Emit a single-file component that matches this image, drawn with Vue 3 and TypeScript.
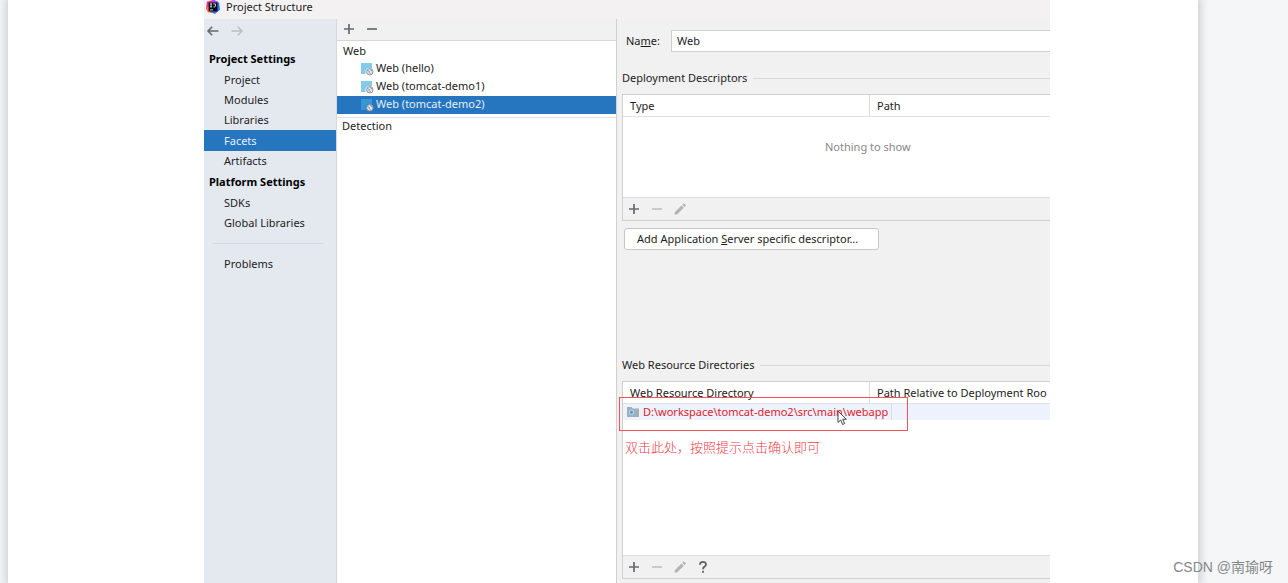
<script setup lang="ts">
import { ref } from 'vue'

interface NavGroup {
  title: string
  items: string[]
}

const groups: NavGroup[] = [
  { title: 'Project Settings', items: ['Project', 'Modules', 'Libraries', 'Facets', 'Artifacts'] },
  { title: 'Platform Settings', items: ['SDKs', 'Global Libraries'] },
]
const facets: string[] = ['Web (hello)', 'Web (tomcat-demo1)', 'Web (tomcat-demo2)']

const activeNav = ref('Facets')
const activeFacet = ref('Web (tomcat-demo2)')
const facetName = ref('Web')
</script>

<template>
  <div class="desk">
    <div class="paper">
      <section class="dialog">
        <header class="titlebar">
          <svg class="logo" viewBox="0 0 16 16" aria-hidden="true">
            <path d="M1 2 8 0 9 8 3 14 0 10Z" fill="#f0318c" />
            <path d="M0 9 4 7 8 15 2 14Z" fill="#f97a3d" />
            <path d="M9 0 15 3 16 11 10 16 5 13Z" fill="#2f6df2" />
            <path d="M8 0 14 2 12 5 7 3Z" fill="#8a4be8" />
            <rect x="3" y="3" width="10" height="10" fill="#0b0b10" />
            <path d="M4.5 4.5h2.6M5.8 4.5v3.4M4.5 7.9h2.6M8.4 4.5h2.4v2.4q0 1-1.2 1H8.4M4.5 11.3h3.6" fill="none" stroke="#fff" stroke-width="0.9" />
          </svg>
          <span>Project Structure</span>
        </header>

        <div class="body">
          <nav class="sidebar">
            <div class="history">
              <button type="button" class="icon" aria-label="Back">
                <svg viewBox="0 0 14 14"><path d="M12.5 7H2M6.2 2.8 2 7l4.2 4.2" fill="none" stroke="#66696e" stroke-width="1.6" /></svg>
              </button>
              <button type="button" class="icon" aria-label="Forward" disabled>
                <svg viewBox="0 0 14 14"><path d="M1.5 7H12M7.8 2.8 12 7l-4.2 4.2" fill="none" stroke="#b9bdc4" stroke-width="1.4" /></svg>
              </button>
            </div>
            <template v-for="group in groups" :key="group.title">
              <h2 class="group">{{ group.title }}</h2>
              <button
                v-for="item in group.items"
                :key="item"
                type="button"
                class="nav-item"
                :class="{ selected: item === activeNav }"
                @click="activeNav = item"
              >{{ item }}</button>
            </template>
            <hr class="nav-rule">
            <button type="button" class="nav-item">Problems</button>
          </nav>

          <div class="facets">
            <div class="facet-tools">
              <button type="button" class="icon" aria-label="Add facet">
                <svg viewBox="0 0 14 14"><path d="M7 2v10M2 7h10" stroke="#66696e" stroke-width="1.7" /></svg>
              </button>
              <button type="button" class="icon" aria-label="Remove facet">
                <svg viewBox="0 0 14 14"><path d="M2 7h10" stroke="#66696e" stroke-width="1.7" /></svg>
              </button>
            </div>
            <div class="tree">
              <div class="tree-root">Web</div>
              <button
                v-for="facet in facets"
                :key="facet"
                type="button"
                class="tree-item"
                :class="{ selected: facet === activeFacet }"
                @click="activeFacet = facet"
              >
                <svg class="facet-icon" viewBox="0 0 14 14" aria-hidden="true">
                  <path class="tile" d="M1 1h11v5H8L5.5 8.5V12H1Z" />
                  <circle cx="9.8" cy="9.8" r="3.2" fill="#e4e7eb" stroke="#8d959f" />
                  <path d="M7.2 8.5 9.5 9.5 9.2 10.8 10.8 12M9.8 7 12 9" fill="none" stroke="#8d959f" />
                </svg>
                <span>{{ facet }}</span>
              </button>
            </div>
            <div class="detection">Detection</div>
          </div>

          <main class="editor">
            <div class="name-row">
              <label for="facet-name">Na<u>m</u>e:</label>
              <input id="facet-name" v-model="facetName" type="text">
            </div>

            <h3 class="legend">Deployment Descriptors</h3>
            <div class="panel descriptors">
              <table class="grid">
                <thead>
                  <tr><th class="first">Type</th><th>Path</th></tr>
                </thead>
              </table>
              <p class="empty">Nothing to show</p>
              <div class="tools">
                <button type="button" class="icon" aria-label="Add descriptor">
                  <svg viewBox="0 0 14 14"><path d="M7 2v10M2 7h10" stroke="#66696e" stroke-width="1.7" /></svg>
                </button>
                <button type="button" class="icon" aria-label="Remove descriptor" disabled>
                  <svg viewBox="0 0 14 14"><path d="M2 7h10" stroke="#bcbcbc" stroke-width="1.5" /></svg>
                </button>
                <button type="button" class="icon" aria-label="Edit descriptor" disabled>
                  <svg viewBox="0 0 14 14"><path d="M1.5 12.8 2 10 8.5 3.5 10.8 5.800 4.300 12.300ZM9.300 2.700 10.800 1.200 13.100 3.500 11.600 5Z" fill="#b4b4b4" /></svg>
                </button>
              </div>
            </div>
            <button type="button" class="push">Add Application <u>S</u>erver specific descriptor...</button>

            <h3 class="legend resources-legend">Web Resource Directories</h3>
            <div class="panel resources">
              <table class="grid">
                <thead>
                  <tr><th class="first">Web Resource Directory</th><th>Path Relative to Deployment Roo</th></tr>
                </thead>
                <tbody>
                  <tr>
                    <td class="first">
                      <div class="path">
                        <svg class="folder" viewBox="0 0 14 12" aria-hidden="true">
                          <path d="M1 1h4.5L7 2.500h6V11H1Z" fill="#a5adb7" />
                          <circle cx="5.500" cy="6.300" r="2.200" fill="#35b3e6" stroke="#c5dfeb" />
                        </svg>
                        <span>D:\workspace\tomcat-demo2\src\main\webapp</span>
                      </div>
                    </td>
                    <td></td>
                  </tr>
                </tbody>
              </table>
              <div class="outline"></div>
              <svg class="cursor" viewBox="0 0 10 16" aria-hidden="true">
                <path d="M1 1v11.500l2.700-2.500 1.900 4.500 2-.9-1.900-4.300h3.600Z" fill="#fff" stroke="#444" />
              </svg>
              <p class="note" lang="zh-CN">双击此处，按照提示点击确认即可</p>
              <div class="tools">
                <button type="button" class="icon" aria-label="Add directory">
                  <svg viewBox="0 0 14 14"><path d="M7 2v10M2 7h10" stroke="#66696e" stroke-width="1.7" /></svg>
                </button>
                <button type="button" class="icon" aria-label="Remove directory" disabled>
                  <svg viewBox="0 0 14 14"><path d="M2 7h10" stroke="#bcbcbc" stroke-width="1.5" /></svg>
                </button>
                <button type="button" class="icon" aria-label="Edit directory" disabled>
                  <svg viewBox="0 0 14 14"><path d="M1.5 12.8 2 10 8.5 3.5 10.8 5.800 4.300 12.300ZM9.300 2.700 10.800 1.200 13.100 3.500 11.600 5Z" fill="#b4b4b4" /></svg>
                </button>
                <button type="button" class="icon" aria-label="Help">
                  <svg viewBox="0 0 14 14"><path d="M4 4.700C4 1.100 10 1.100 10 4.400 10 6.600 7 6.500 7 9.200M7 10.700v2" fill="none" stroke="#5f6266" stroke-width="1.800" /></svg>
                </button>
              </div>
            </div>
          </main>
        </div>
      </section>
    </div>
    <p class="watermark" lang="zh-CN">CSDN @南瑜呀</p>
  </div>
</template>

<style>
body {
  margin: 0;
}
</style>

<style scoped>
* {
  box-sizing: border-box;
}
.desk {
  position: relative;
  display: flex;
  min-height: 100vh;
  padding: 0 90px 0 8px;
  overflow: hidden;
  background: #f5f6f8;
  font: 11px/18px "Noto Sans", "Open Sans", sans-serif;
  color: #1c1c1c;
}
.paper {
  display: flex;
  flex: 1;
  min-width: 0;
  padding: 0 148px 0 196px;
  background: #fff;
  box-shadow: 0 0 8px 3px #cfd1d4;
}
.dialog {
  display: flex;
  flex: 1;
  flex-direction: column;
  min-width: 0;
  overflow: hidden;
  background: #f1f1f1;
}
.titlebar {
  display: flex;
  align-items: flex-start;
  gap: 6px;
  height: 19px;
  padding: 0 2px;
  background: #f3f1f2;
  line-height: 14px;
}
.logo {
  width: 14px;
  height: 14px;
}
.body {
  display: flex;
  flex: 1;
  min-height: 0;
}
button {
  font: inherit;
  color: inherit;
  border: 0;
  padding: 0;
  background: none;
  text-align: left;
}
.icon {
  display: flex;
  width: 14px;
  height: 14px;
}
.icon svg {
  width: 14px;
  height: 14px;
}
.sidebar {
  width: 133px;
  flex: none;
  background: #e4e9f0;
  border-right: 1px solid #d5d8dd;
}
.history {
  display: flex;
  gap: 10px;
  padding: 5px 2px 10px;
}
.group {
  margin: 0;
  padding-left: 5px;
  font-size: 11px;
  font-weight: 700;
  line-height: 22px;
  color: #000;
}
.nav-item {
  display: block;
  width: 100%;
  padding-left: 20px;
  line-height: 20px;
}
.nav-item.selected {
  line-height: 21px;
}
.selected {
  background: #2675bf;
  color: #e6eff8;
}
.nav-rule {
  margin: 10px 12px 10px 8px;
  border: 0;
  border-top: 1px solid #d6dae2;
}
.facets {
  width: 280px;
  flex: none;
  background: #fff;
  border-right: 1px solid #d0d0d0;
}
.facet-tools {
  display: flex;
  gap: 9px;
  height: 22px;
  padding: 3px 5px;
  background: #f1f1f1;
  border-bottom: 1px solid #d6d6d6;
}
.tree {
  padding: 1px 0 3px;
  border-bottom: 1px solid #e2e2e2;
}
.tree-root {
  padding-left: 6px;
}
.tree-item {
  display: flex;
  align-items: center;
  gap: 2px;
  width: 100%;
  height: 18px;
  padding-left: 23px;
}
.tree-item span {
  height: 18px;
  line-height: 16px;
}
.facet-icon {
  width: 14px;
  height: 14px;
}
.tile {
  fill: #83cbe7;
}
.selected .tile {
  fill: #3597d3;
}
.detection {
  padding-left: 5px;
  line-height: 16px;
}
.editor {
  display: flex;
  flex: 1;
  flex-direction: column;
  min-width: 0;
  padding: 11px 0 4px 5px;
  overflow: hidden;
}
.name-row {
  display: flex;
  align-items: center;
  height: 22px;
}
.name-row label {
  width: 49px;
  padding-left: 4px;
}
.name-row input {
  flex: 1;
  min-width: 0;
  height: 22px;
  padding: 0 5px 1px;
  border: 1px solid #cfcfcf;
  border-right: 0;
  background: #fff;
  font: inherit;
  color: inherit;
}
.legend {
  display: flex;
  align-items: center;
  gap: 6px;
  margin: 17px 0 7px;
  font-size: 11px;
  line-height: 18px;
  font-weight: 400;
}
.legend::after {
  content: "";
  flex: 1;
  border-top: 1px solid #d8d8d8;
}
.panel {
  position: relative;
  display: flex;
  flex-direction: column;
  background: #fff;
  border: 1px solid #d0d0d0;
  border-right: 0;
}
.grid {
  width: 100%;
  table-layout: fixed;
  border-collapse: separate;
  border-spacing: 0;
}
.grid th {
  height: 22px;
  padding: 0 7px;
  border-bottom: 1px solid #e2e2e2;
  font-weight: 400;
  text-align: left;
  white-space: nowrap;
}
.grid th.first {
  width: 247px;
  border-right: 1px solid #dcdcdc;
}
.grid td {
  height: 16px;
  padding: 0;
  background: #edf2fd;
}
.path {
  display: flex;
  align-items: center;
  gap: 3px;
  width: max-content;
  height: 16px;
  padding: 0 3px;
  border-right: 1px solid #d9dde6;
  background: #edf2fd;
  color: #e0212b;
  white-space: nowrap;
  position: relative;
}
.folder {
  width: 14px;
  height: 12px;
}
.empty {
  flex: 1;
  margin: 0;
  padding: 21px 0 41px 202px;
  color: #888;
}
.tools {
  display: flex;
  align-items: center;
  gap: 9px;
  height: 23px;
  padding-left: 4px;
  margin-top: auto;
  background: #f1f1f1;
  border-top: 1px solid #dcdcdc;
}
.push {
  align-self: flex-start;
  min-width: 255px;
  height: 22px;
  margin: 7px 0 0 2px;
  padding: 0 12px;
  border: 1px solid #c8c8c8;
  border-radius: 3px;
  background: #fff;
  line-height: 18px;
}
.resources-legend {
  margin-top: 106px;
}
.resources {
  flex: 1;
}
.outline {
  position: absolute;
  top: 15px;
  left: -4px;
  width: 289px;
  height: 34px;
  border: 1px solid #f4525b;
}
.cursor {
  position: absolute;
  top: 28px;
  left: 214px;
  width: 10px;
  height: 16px;
}
.note {
  margin: 18px 0 0 2px;
  font: 300 13px/18px "Noto Sans CJK SC", sans-serif;
  color: #f33b48;
}
.watermark {
  position: absolute;
  right: 15px;
  bottom: 6px;
  margin: 0;
  font: 14px/20px "Liberation Sans", "Noto Sans CJK SC", sans-serif;
  color: #85878a;
}
</style>
